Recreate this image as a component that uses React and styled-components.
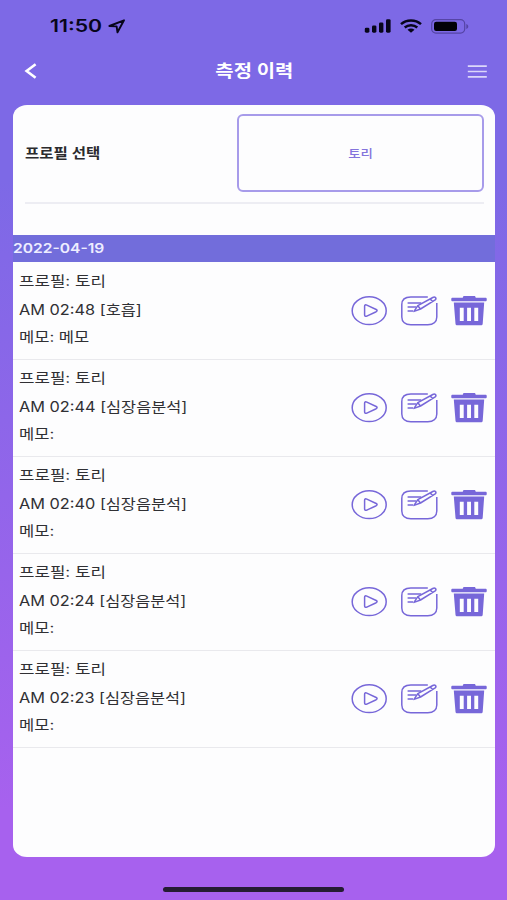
import React from "react";
import styled, { createGlobalStyle } from "styled-components";

const GlobalStyle = createGlobalStyle`
  body {
    margin: 0;
    font-family: Inter, "Noto Sans CJK KR", sans-serif;
  }
`;

const Screen = styled.div`
  display: flex;
  flex-direction: column;
  box-sizing: border-box;
  width: 507px;
  height: 900px;
  overflow: hidden;
  background: linear-gradient(#7d69e6 20%, #a761ee 90%);
`;

// wide lettering, stretched sideways from one edge
const Wide = styled.span`
  display: inline-block;
  white-space: pre;
  transform: scaleX(${(props) => props.$x || 1.2});
  transform-origin: ${(props) => props.$origin || "left"} center;
`;

const StatusBar = styled.div`
  display: flex;
  align-items: center;
  justify-content: space-between;
  height: 52px;
  padding: 0 38px 0 50px;
  color: #07051a;
`;

const Clock = styled.div`
  display: flex;
  align-items: center;
  font-size: 17px;
  font-weight: 600;
  line-height: 20px;
`;

const ClockTime = styled.div`
  width: 58px;
`;

const Signals = styled.div`
  display: flex;
  align-items: center;
  gap: 9px;
`;

const Header = styled.header`
  display: grid;
  grid-template-columns: 39px 1fr 42px;
  align-items: center;
  height: 38px;
  padding: 0 20px 0 23px;
  color: #fff;
`;

const Title = styled.h1`
  margin: 0;
  padding-left: 1px;
  font-size: 17px;
  font-weight: 700;
  line-height: 24px;
  text-align: center;
`;

const IconButton = styled.button`
  display: flex;
  justify-content: ${(props) => (props.$right ? "flex-end" : "flex-start")};
  padding: 0;
  border: 0;
  background: none;
  color: inherit;
`;

const Card = styled.main`
  height: 752px;
  margin: 15px 12px 0 13px;
  border-radius: 14px / 12px;
  background: #fdfdfe;
  overflow: hidden;
`;

const ProfileRow = styled.div`
  display: flex;
  align-items: center;
  justify-content: space-between;
  box-sizing: border-box;
  height: 99px;
  margin: 0 11px 31px 12px;
  padding-bottom: 1px;
  border-bottom: 2px solid #ededf3;
`;

const ProfileLabel = styled.div`
  padding-bottom: 2px;
  font-size: 13.5px;
  font-weight: 600;
  color: #2b2b2e;
`;

const ProfileSelect = styled.button`
  box-sizing: border-box;
  width: 247px;
  height: 78px;
  padding: 0;
  border: 2px solid #a79bea;
  border-radius: 6px;
  background: none;
  color: #8474dc;
  font-family: inherit;
  font-size: 11.5px;
  font-weight: 500;
`;

const DateBar = styled.div`
  height: 27px;
  margin-bottom: 1px;
  background: #726ddb;
  color: #eeedff;
  font-size: 13px;
  font-weight: 600;
  line-height: 26px;
`;

const Record = styled.div`
  display: flex;
  justify-content: space-between;
  box-sizing: border-box;
  height: 97px;
  padding: 4px 8px 0 6px;
  border-bottom: 1px solid #e9e9ed;
`;

const Lines = styled.div`
  display: grid;
  grid-template-rows: 29px 27px 27px;
  align-content: start;
  color: #303034;
  font-size: 14px;
  line-height: 27px;
`;

const Actions = styled.div`
  display: flex;
  gap: 13px;
  height: 30px;
  margin-top: 29px;
  color: #7767d9;
`;

const HomeIndicator = styled.div`
  width: 181px;
  height: 5px;
  margin: 30px auto 0 163px;
  border-radius: 3px;
  background: #251c33;
`;

const LocationIcon = () => (
  <svg width="18" height="15" viewBox="0 0 18 15" fill="none" stroke="currentColor" strokeWidth="1.9" strokeLinejoin="round">
    <path d="M1.4 7 16 1.3 9.5 13.3 8.6 7.4Z" />
  </svg>
);

const CellIcon = () => (
  <svg width="27" height="14" viewBox="0 0 27 14" fill="currentColor">
    <rect x="0.8" y="8.7" width="4.6" height="5" rx="1.4" />
    <rect x="8" y="6.4" width="4.4" height="7.3" rx="1.4" />
    <rect x="15" y="3.4" width="4.4" height="10.3" rx="1.4" />
    <rect x="22" y="0.2" width="4.6" height="13.5" rx="1.4" />
  </svg>
);

const WifiIcon = () => (
  <svg width="22" height="14" viewBox="0 0 22 14" fill="none" stroke="currentColor" strokeWidth="2.5">
    <path d="M1 5.1C6.5.2 15.5.2 21 5.1" />
    <path d="M4.7 8.5c3.5-3 9.1-3 12.6 0" />
    <path d="M7.5 10.8c2-1.7 5-1.7 7 0L11 13.8Z" fill="currentColor" stroke="none" />
  </svg>
);

const BatteryIcon = () => (
  <svg width="38" height="15" viewBox="0 0 38 15">
    <rect x="0.7" y="0.7" width="33" height="13.4" rx="4.2" fill="none" stroke="#5544a5" strokeWidth="1.2" />
    <rect x="3" y="2.8" width="23" height="9.2" rx="2.2" fill="#020108" />
    <path d="M35.3 5v5c2.6-.8 2.6-4.2 0-5Z" fill="#5544a5" />
  </svg>
);

const BackIcon = () => (
  <svg width="14" height="16" viewBox="0 0 14 16" fill="none" stroke="currentColor" strokeWidth="2.6">
    <path d="M12.6 1.2 3.600 8l9 6.800" />
  </svg>
);

const MenuIcon = () => (
  <svg width="20" height="13" viewBox="0 0 20 13" fill="none" stroke="#dcd7fa" strokeWidth="1.7">
    <path d="M.8 1.2h19M.8 6.5h19M.8 11.8h19" />
  </svg>
);

const PlayIcon = () => (
  <svg width="36" height="30" viewBox="0 0 36 30" fill="none" stroke="currentColor" strokeWidth="1.5">
    <ellipse cx="18.2" cy="14.7" rx="17" ry="13.9" />
    <path d="M13.6 10.3c0-1.3.9-1.8 2.2-1.2l9.4 4.4c1.2.6 1.2 1.6 0 2.2l-9.4 4.4c-1.3.6-2.2.1-2.2-1.2Z" />
  </svg>
);

const EditIcon = () => (
  <svg width="38" height="30" viewBox="-0.3 0.2 38 30" fill="none" stroke="currentColor" strokeWidth="1.5" strokeLinejoin="round">
    <path d="M27.5 1.2H10.5C5 1.2 1.5 4 1.5 8.8v12.4c0 4.8 3.5 7.7 9 7.7h17c5.5 0 9-2.9 9-7.7V7.3" />
    <path d="M7.3 7.3H21M7.3 11.3h8.5M7.3 15.3h5.5" />
    <path d="M13.7 15.6 17.5 9.9 32.5 1.7c2.2-1.2 4.3.8 2.4 2.3L20.2 13.2ZM17.5 9.9l2.7 3.3M29.8 3.2l2.5 2.4" />
  </svg>
);

const TrashIcon = () => (
  <svg width="36" height="30" viewBox="0 0 36 30" fill="currentColor">
    <path d="M12.5 0h11.5l.8 1.8H35c1 0 1 3.5 0 3.5H1c-1 0-1-3.5 0-3.5h10.7Z" />
    <path
      fillRule="evenodd"
      d="M2.8 6.4h30.4L31.7 27.7c-.1 1-.8 1.6-1.9 1.6H6.4c-1.1 0-1.8-.6-1.9-1.6ZM8.8 11.8v13.1h3.9V11.8ZM16.1 11.8v13.1H20V11.8ZM23.300 11.8v13.1h3.9V11.8Z"
    />
  </svg>
);

const records = [
  { time: "AM 02:48", type: "호흡", memo: "메모" },
  { time: "AM 02:44", type: "심장음분석", memo: "" },
  { time: "AM 02:40", type: "심장음분석", memo: "" },
  { time: "AM 02:24", type: "심장음분석", memo: "" },
  { time: "AM 02:23", type: "심장음분석", memo: "" },
];

function RecordItem({ time, type, memo }) {
  return (
    <Record>
      <Lines>
        <Wide>프로필: 토리</Wide>
        <Wide $x={1.165}>{`${time} [${type}]`}</Wide>
        <Wide $x={1.18}>{`메모: ${memo}`}</Wide>
      </Lines>
      <Actions>
        <IconButton>
          <PlayIcon />
        </IconButton>
        <IconButton>
          <EditIcon />
        </IconButton>
        <IconButton>
          <TrashIcon />
        </IconButton>
      </Actions>
    </Record>
  );
}

export default function App() {
  return (
    <Screen>
      <GlobalStyle />
      <StatusBar>
        <Clock>
          <ClockTime>
            <Wide $x={1.25}>11:50</Wide>
          </ClockTime>
          <LocationIcon />
        </Clock>
        <Signals>
          <CellIcon />
          <WifiIcon />
          <BatteryIcon />
        </Signals>
      </StatusBar>
      <Header>
        <IconButton>
          <BackIcon />
        </IconButton>
        <Title>
          <Wide $x={1.17} $origin="center">측정 이력</Wide>
        </Title>
        <IconButton $right>
          <MenuIcon />
        </IconButton>
      </Header>
      <Card>
        <ProfileRow>
          <ProfileLabel>
            <Wide $x={1.15}>프로필 선택</Wide>
          </ProfileLabel>
          <ProfileSelect>
            <Wide $x={1.17} $origin="center">토리</Wide>
          </ProfileSelect>
        </ProfileRow>
        <DateBar>
          <Wide $x={1.2}>2022-04-19</Wide>
        </DateBar>
        {records.map((record) => (
          <RecordItem key={record.time} {...record} />
        ))}
      </Card>
      <HomeIndicator />
    </Screen>
  );
}
